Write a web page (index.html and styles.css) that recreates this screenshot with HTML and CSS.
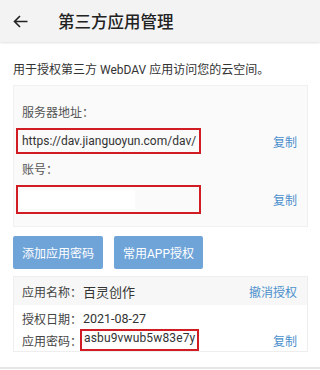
FILE: index.html
```html
<!DOCTYPE html>
<html lang="zh-CN">
<head>
  <meta charset="UTF-8">
  <meta name="viewport" content="width=device-width, initial-scale=1.0">
  <title>第三方应用管理</title>
  <link rel="stylesheet" href="styles.css">
</head>
<body>
  <div class="topbar">
    <svg class="back" width="15" height="13" viewBox="0 0 15 13">
      <path d="M14.5 6.5H1.5M7 1L1.5 6.5 7 12" fill="none" stroke="#222" stroke-width="1.6"/>
    </svg>
    <span class="title">第三方应用管理</span>
  </div>

  <div class="page">
    <p class="intro">用于授权第三方 WebDAV 应用访问您的云空间。</p>

    <div class="card">
      <div class="label">服务器地址：</div>
      <div class="field-row">
        <div class="marked url">https://dav.jianguoyun.com/dav/</div>
        <a class="link">复制</a>
      </div>
      <div class="label">账号：</div>
      <div class="field-row">
        <div class="marked account"><span class="blank"></span></div>
        <a class="link">复制</a>
      </div>
    </div>

    <div class="actions">
      <button>添加应用密码</button>
      <button>常用APP授权</button>
    </div>

    <div class="app-card">
      <div class="app-head">
        <span class="key">应用名称：</span>
        <span class="name">百灵创作</span>
        <a class="link">撤消授权</a>
      </div>
      <div class="app-body">
        <div class="line">
          <span class="key">授权日期：</span>
          <span class="val">2021-08-27</span>
        </div>
        <div class="line">
          <span class="key">应用密码：</span>
          <span class="val pwd">asbu9vwub5w83e7y</span>
          <a class="link">复制</a>
        </div>
      </div>
    </div>
  </div>
  <div class="bottom-line"></div>
</body>
</html>
```

FILE: styles.css
```css
body {
  margin: 0;
  font-family: Roboto, "Noto Sans CJK SC", sans-serif;
  color: #333;
  background-color: #fff;
  width: 320px;
  height: 370px;
  overflow: hidden;
}

.topbar {
  height: 42px;
  display: flex;
  align-items: center;
  background-color: #f3f3f3;
  box-shadow: 0 1px 2px rgba(0, 0, 0, 0.12);
  position: relative;
}
.back {
  margin-left: 13px;
}
.title {
  margin-left: 30px;
  font-size: 16.5px;
  font-weight: 500;
  color: #222;
}

.page {
  padding: 0 12px 0 13px;
}
.intro {
  margin: 18px 0 5px;
  font-size: 12px;
  line-height: 20px;
  color: #333;
}

.card {
  background-color: #fafafa;
  border: 1px solid #f0f0f0;
  padding: 18px 10px 12px 2px;
}
.label {
  font-size: 12px;
  line-height: 18px;
  color: #555;
  padding-left: 6px;
  margin-bottom: 6px;
}
.field-row {
  display: flex;
  align-items: center;
  justify-content: space-between;
  margin-bottom: 7px;
}
.field-row:last-child {
  margin-bottom: 0;
}
.marked {
  border: 2px solid #d01c22;
  box-sizing: border-box;
  width: 185px;
}
.url {
  height: 26px;
  line-height: 22px;
  padding-left: 4px;
  font-size: 12px;
  color: #333;
  white-space: nowrap;
}
.account {
  height: 29px;
  padding: 3px 2px;
}
.blank {
  display: block;
  width: 115px;
  height: 100%;
  background-color: #fff;
}
.link {
  color: #4a8fcc;
  font-size: 12px;
}

.actions {
  display: flex;
  gap: 11px;
  margin: 9px 0 7px;
}
.actions button {
  height: 33px;
  padding: 0 9px;
  background-color: #6fa4d9;
  color: #fff;
  border: none;
  border-radius: 2px;
  font-family: inherit;
  font-size: 12px;
}

.app-card {
  border: 1px solid #eee;
}
.app-head {
  display: flex;
  align-items: center;
  height: 28px;
  padding: 0 10px 0 8px;
  background-color: #f7f7f7;
  font-size: 12px;
}
.app-head .name {
  font-size: 13px;
  flex: 1;
}
.app-body {
  padding: 2px 10px 0 8px;
}
.line {
  display: flex;
  align-items: center;
  height: 22px;
  font-size: 12px;
}
.key {
  flex: none;
  width: 61px;
  color: #444;
  white-space: nowrap;
}
.val {
  flex: 1;
  color: #333;
  font-size: 12.5px;
}
.pwd {
  flex: none;
  margin-left: -3px;
  margin-right: auto;
  border: 2px solid #d01c22;
  padding: 0 2px;
  height: 18px;
  line-height: 14px;
  font-size: 12px;
  letter-spacing: 0.15px;
}

.bottom-line {
  position: absolute;
  left: 0;
  top: 367px;
  width: 320px;
  height: 2px;
  background-color: #e6e6e6;
}
```
